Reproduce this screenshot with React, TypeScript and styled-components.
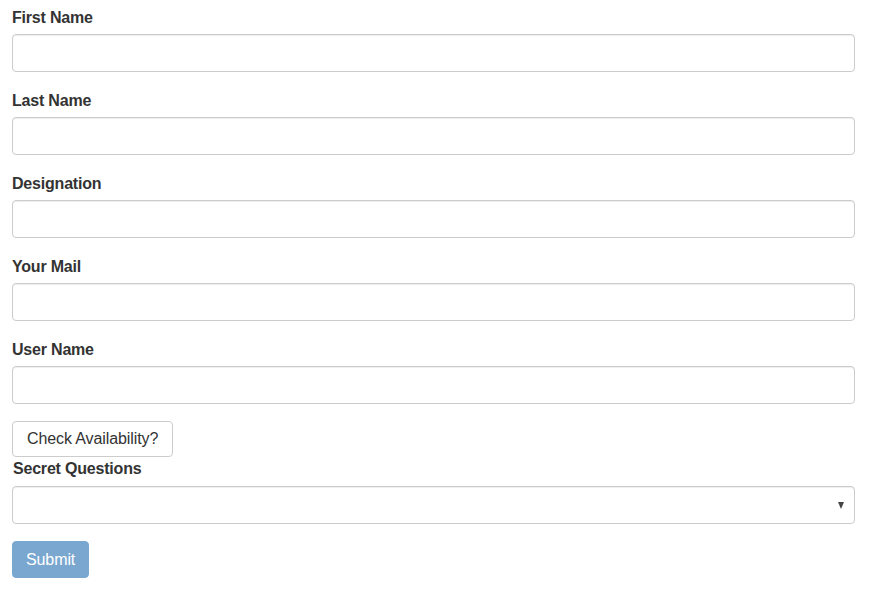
import React from "react";
import styled, { createGlobalStyle } from "styled-components";

const GlobalStyle = createGlobalStyle`
  body {
    margin: 0;
    background: #ffffff;
    font-family: "Liberation Sans", Arial, sans-serif;
    color: #333333;
  }
`;

const StyledForm = styled.form`
  box-sizing: border-box;
  width: 855px;
  padding: 6px 0 0 12px;
`;

const StyledGroup = styled.div`
  margin-bottom: 17px;
`;

const StyledLabel = styled.label<{ $tight?: boolean }>`
  display: block;
  font-size: 16px;
  font-weight: bold;
  line-height: 23px;
  letter-spacing: -0.2px;
  margin-bottom: ${(p) => (p.$tight ? "6px" : "5px")};
  padding-left: ${(p) => (p.$tight ? "1px" : "0")};
`;

const StyledInput = styled.input`
  box-sizing: border-box;
  display: block;
  width: 100%;
  height: 38px;
  padding: 6px 12px;
  font-family: inherit;
  font-size: 16px;
  color: #555555;
  background: #ffffff;
  border: 1px solid #cccccc;
  border-radius: 4px;
  box-shadow: inset 0 1px 1px rgba(0, 0, 0, 0.075);
  outline: none;
`;

const StyledSelectWrap = styled.div`
  position: relative;
`;

const StyledSelect = styled.select`
  box-sizing: border-box;
  display: block;
  width: 100%;
  height: 38px;
  padding: 6px 12px;
  font-family: inherit;
  font-size: 16px;
  background: #ffffff;
  border: 1px solid #cccccc;
  border-radius: 4px;
  box-shadow: inset 0 1px 1px rgba(0, 0, 0, 0.075);
  appearance: none;
  outline: none;
`;

const StyledArrow = styled.span`
  position: absolute;
  right: 11px;
  top: 16px;
  width: 0;
  height: 0;
  border-left: 3.5px solid transparent;
  border-right: 3.5px solid transparent;
  border-top: 7px solid #444444;
  pointer-events: none;
`;

const StyledButton = styled.button<{ $primary?: boolean }>`
  display: block;
  height: ${(p) => (p.$primary ? "37px" : "36px")};
  padding: 0 ${(p) => (p.$primary ? "13px" : "14px")};
  font-family: inherit;
  font-size: 16px;
  letter-spacing: -0.1px;
  color: ${(p) => (p.$primary ? "#ffffff" : "#333333")};
  background: ${(p) => (p.$primary ? "#7aa7d0" : "#ffffff")};
  border: 1px solid ${(p) => (p.$primary ? "#7aa7d0" : "#cccccc")};
  border-radius: 4px;
  cursor: pointer;
`;

const StyledSubmitRow = styled.div`
  margin-top: 17px;
`;

const fields = ["First Name", "Last Name", "Designation", "Your Mail", "User Name"];

const App: React.FC = () => {
  return (
    <>
      <GlobalStyle />
      <StyledForm onSubmit={(e) => e.preventDefault()}>
        {fields.map((name) => (
          <StyledGroup key={name}>
            <StyledLabel>{name}</StyledLabel>
            <StyledInput type="text" />
          </StyledGroup>
        ))}
        <StyledButton type="button">Check Availability?</StyledButton>
        <StyledLabel $tight>Secret Questions</StyledLabel>
        <StyledSelectWrap>
          <StyledSelect defaultValue="">
            <option value=""></option>
          </StyledSelect>
          <StyledArrow />
        </StyledSelectWrap>
        <StyledSubmitRow>
          <StyledButton $primary type="submit">
            Submit
          </StyledButton>
        </StyledSubmitRow>
      </StyledForm>
    </>
  );
};

export default App;
